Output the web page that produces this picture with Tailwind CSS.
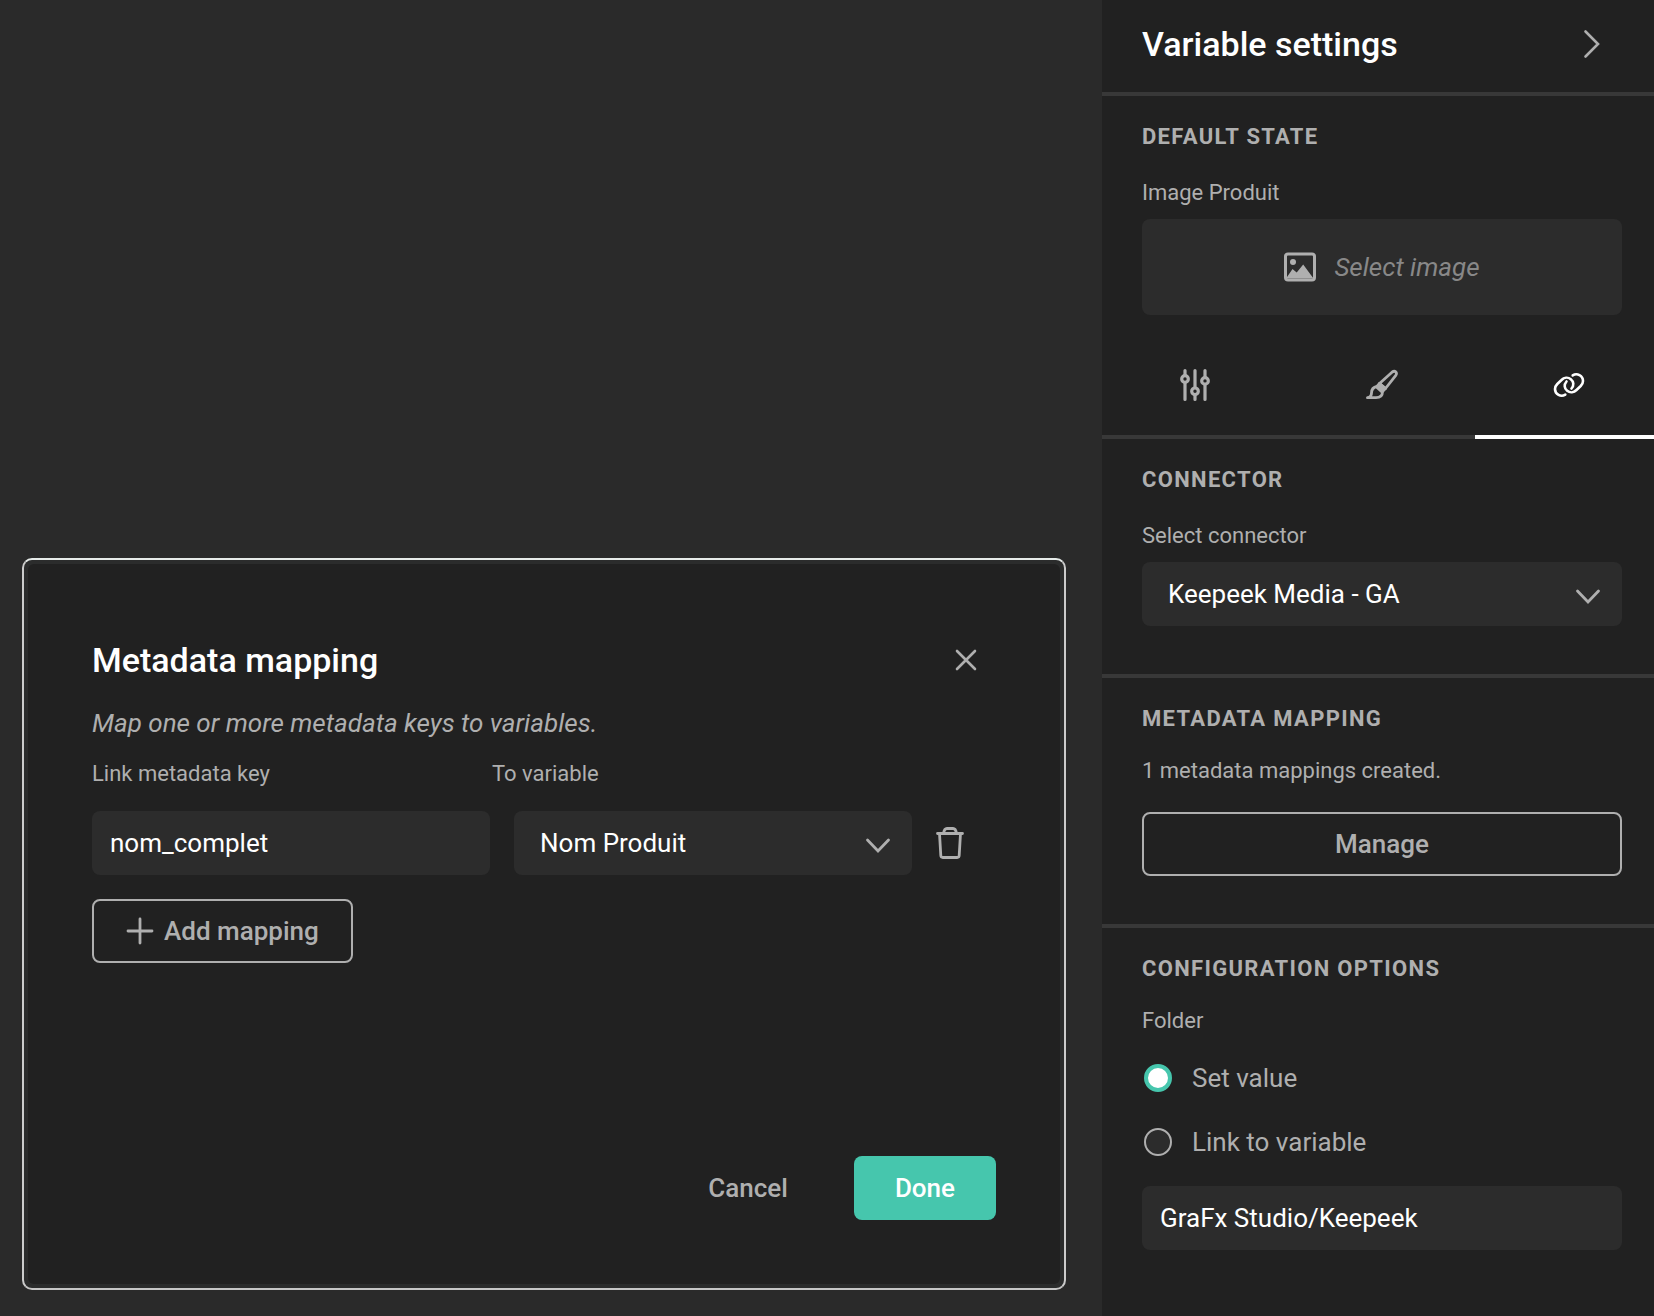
<!DOCTYPE html>
<html lang="en">
<head>
<meta charset="utf-8">
<meta name="viewport" content="width=device-width, initial-scale=1">
<title>Variable settings</title>
<script src="https://cdn.jsdelivr.net/npm/@tailwindcss/browser@4"></script>
</head>
<body class="flex min-h-screen bg-[#2a2a2a] font-[Roboto,sans-serif] text-[26px] leading-8 text-[#afafaf]">

<!-- Canvas with the mapping dialog -->
<main class="flex min-w-0 flex-1 items-end pr-9 pb-[26px] pl-[22px]">
  <section role="dialog" aria-labelledby="dialog-title" class="w-full rounded-[10px] border-2 border-t-[#e6ebe9] border-r-[#cccccc] border-b-[#c6c6c6] border-l-[#cccccc] bg-[#2b2c2c] p-1">
    <div class="flex min-h-[720px] flex-col rounded-md bg-[#212121] p-16">
      <div class="flex h-16 items-center justify-between">
        <h1 id="dialog-title" class="text-[34px] leading-10 font-medium text-white">Metadata mapping</h1>
        <button type="button" aria-label="Close" class="mr-3 p-1">
          <svg class="size-7" viewBox="0 0 28 28" fill="none" stroke="currentColor" stroke-width="2.6" stroke-linecap="round"><path d="M5 5l18 18M23 5L5 23"/></svg>
        </button>
      </div>
      <p class="mt-[15px] italic">Map one or more metadata keys to variables.</p>
      <div class="mt-[21px] flex text-[22px] leading-7">
        <label for="metadata-key" class="w-[400px]">Link metadata key</label>
        <label for="variable">To variable</label>
      </div>
      <div class="mt-[23px] flex items-center gap-6">
        <div class="min-w-0 flex-1">
          <input id="metadata-key" type="text" value="nom_complet" class="block h-16 w-full rounded-lg bg-[#2c2c2c] px-[18px] text-white">
        </div>
        <div class="relative min-w-0 flex-1">
          <select id="variable" class="block h-16 w-full appearance-none rounded-lg bg-[#2c2c2c] px-[26px] text-white"><option>Nom Produit</option></select>
          <svg class="pointer-events-none absolute top-6 right-5 h-5 w-7" viewBox="0 0 28 20" fill="none" stroke="currentColor" stroke-width="2.8" stroke-linecap="round"><path d="M3.500 5L14 16L24.500 5"/></svg>
        </div>
        <button type="button" aria-label="Delete mapping" class="mr-8">
          <svg class="h-8 w-7" viewBox="0 0 28 32" fill="none" stroke="currentColor" stroke-width="2.8" stroke-linecap="round" stroke-linejoin="round"><path d="M1.500 6.500h25M7.500 6.500C8 3 9.500 1.500 11 1.500h6c1.500 0 3 1.500 3.500 5M3.500 6.500l1.300 22c.1 1.300.8 2 2 2h14.400c1.200 0 1.900-.7 2-2l1.300-22"/></svg>
        </button>
      </div>
      <button type="button" class="mt-6 flex h-16 items-center gap-2.5 self-start rounded-lg border-2 border-[#afafaf] px-8 font-medium">
        <svg class="size-7" viewBox="0 0 28 28" fill="none" stroke="currentColor" stroke-width="2.8" stroke-linecap="round"><path d="M14 2v24M2 14h24"/></svg>
        Add mapping
      </button>
      <div class="mt-auto flex justify-end gap-6">
        <button type="button" class="h-16 px-[42px] font-medium">Cancel</button>
        <button type="button" class="h-16 rounded-lg bg-[#46c6ad] px-[41px] font-medium text-white">Done</button>
      </div>
    </div>
  </section>
</main>

<!-- Settings panel -->
<aside class="w-[552px] shrink-0 overflow-hidden bg-[#212121]">
  <header class="flex h-24 items-center justify-between border-b-4 border-[#383838] pr-12 pb-1 pl-10">
    <h2 class="text-[34px] leading-10 font-medium text-white">Variable settings</h2>
    <button type="button" aria-label="Collapse panel">
      <svg class="h-8 w-7" viewBox="0 0 28 32" fill="none" stroke="currentColor" stroke-width="2.600" stroke-linecap="round"><path d="M7.500 3.500L20 16L7.500 28.500"/></svg>
    </button>
  </header>

  <section class="pt-[27px] pr-8 pl-10">
    <h3 class="text-[22px] leading-7 font-bold tracking-[0.06em]">DEFAULT STATE</h3>
    <p class="mt-7 text-[22px] leading-7">Image Produit</p>
    <button type="button" class="mt-3 flex h-24 w-full items-center justify-center gap-[18px] rounded-lg bg-[#2c2c2c]">
      <svg class="size-8" viewBox="0 0 32 32" fill="none" stroke="currentColor" stroke-width="3"><rect x="1.500" y="3" width="29" height="26" rx="2.500"/><circle cx="9" cy="11" r="3" fill="currentColor" stroke="none"/><path d="M2 27.500l6.500-9.500 4.200 3.500 6.500-8L29.500 27.500z" fill="currentColor" stroke="none"/></svg>
      <span class="text-[#888888] italic">Select image</span>
    </button>
  </section>

  <div role="tablist" class="mt-5 -mr-2 grid grid-cols-3">
    <button type="button" role="tab" aria-label="Settings" class="flex h-[104px] items-center justify-center border-b-4 border-[#383838]">
      <svg class="size-8" viewBox="0 0 32 32" fill="none" stroke="currentColor" stroke-width="3.200" stroke-linecap="round"><path d="M6 1.600v4.900M6 13.500v16.900M16 1.600v17M16 26v4.400M26 1.600v6.400M26 15.500v14.900"/><circle cx="6" cy="10" r="3.300"/><circle cx="16" cy="22.300" r="3.300"/><circle cx="26" cy="11.900" r="3.300"/></svg>
    </button>
    <button type="button" role="tab" aria-label="Appearance" class="flex h-[104px] items-center justify-center border-b-4 border-[#383838]">
      <svg class="size-8" viewBox="0 0 32 32" fill="none" stroke="currentColor" stroke-width="2.800" stroke-linecap="round" stroke-linejoin="round"><path d="M13.500 14.500L26 3.200c3-2.200 5.600.2 3.800 3.200L19.500 19.500z"/><path d="M13.500 14.500l6 5-3.500 3.500-5.500-5z" fill="currentColor"/><path d="M11 17.500c-4 .7-5.500 3-5.500 6.500 0 2.800-1.500 4.300-4 4.700h8.500c4 0 6.500-2.200 6.500-6.200"/></svg>
    </button>
    <button type="button" role="tab" aria-selected="true" aria-label="Connector" class="flex h-[104px] items-center justify-center border-b-4 border-white text-white">
      <svg class="size-8" viewBox="0 0 32 32" fill="none" stroke="currentColor" stroke-width="2.600" stroke-linecap="round"><path d="M12.300 25.600C8 28.500 2 25.500 2 20c0-2.200 1-3.700 2.300-5L8.500 11c2.500-2.500 6.500-3 9.300-.8 3 2.400 3.400 6.300.7 9.300"/><path d="M19.700 6.400C24 3.500 30 6.500 30 12c0 2.200-1 3.700-2.300 5L23.500 21c-2.500 2.500-6.500 3-9.300.8-3-2.400-3.400-6.300-.7-9.300"/></svg>
    </button>
  </div>

  <section class="border-b-4 border-[#383838] pt-[27px] pr-8 pb-12 pl-10">
    <h3 class="text-[22px] leading-7 font-bold tracking-[0.06em]">CONNECTOR</h3>
    <label for="connector" class="mt-7 block text-[22px] leading-7">Select connector</label>
    <div class="relative mt-3">
      <select id="connector" class="block h-16 w-full appearance-none rounded-lg bg-[#2c2c2c] px-[26px] text-white"><option>Keepeek Media - GA</option></select>
      <svg class="pointer-events-none absolute top-6 right-5 h-5 w-7" viewBox="0 0 28 20" fill="none" stroke="currentColor" stroke-width="2.800" stroke-linecap="round"><path d="M3.500 5L14 16L24.500 5"/></svg>
    </div>
  </section>

  <section class="border-b-4 border-[#383838] pt-[27px] pr-8 pb-12 pl-10">
    <h3 class="text-[22px] leading-7 font-bold tracking-[0.06em]">METADATA MAPPING</h3>
    <p class="mt-6 text-[22px] leading-7">1 metadata mappings created.</p>
    <button type="button" class="mt-[27px] block h-16 w-full rounded-lg border-2 border-[#afafaf] font-medium">Manage</button>
  </section>

  <section class="pt-[27px] pr-8 pl-10">
    <h3 class="text-[22px] leading-7 font-bold tracking-[0.06em]">CONFIGURATION OPTIONS</h3>
    <fieldset>
      <legend class="pt-6 text-[22px] leading-7">Folder</legend>
      <label class="mt-[27px] flex h-8 items-center gap-5 pl-0.5">
        <input type="radio" name="folder" checked class="size-7 appearance-none rounded-full border-2 border-[#afafaf] bg-[#2c2c2c] checked:border-4 checked:border-[#46c6ad] checked:bg-white">
        Set value
      </label>
      <label class="mt-8 flex h-8 items-center gap-5 pl-0.5">
        <input type="radio" name="folder" class="size-7 appearance-none rounded-full border-2 border-[#afafaf] bg-[#2c2c2c] checked:border-4 checked:border-[#46c6ad] checked:bg-white">
        Link to variable
      </label>
    </fieldset>
    <input type="text" aria-label="Folder" value="GraFx Studio/Keepeek" class="mt-7 block h-16 w-full rounded-lg bg-[#2c2c2c] px-[18px] text-white">
  </section>
</aside>
</body>
</html>
